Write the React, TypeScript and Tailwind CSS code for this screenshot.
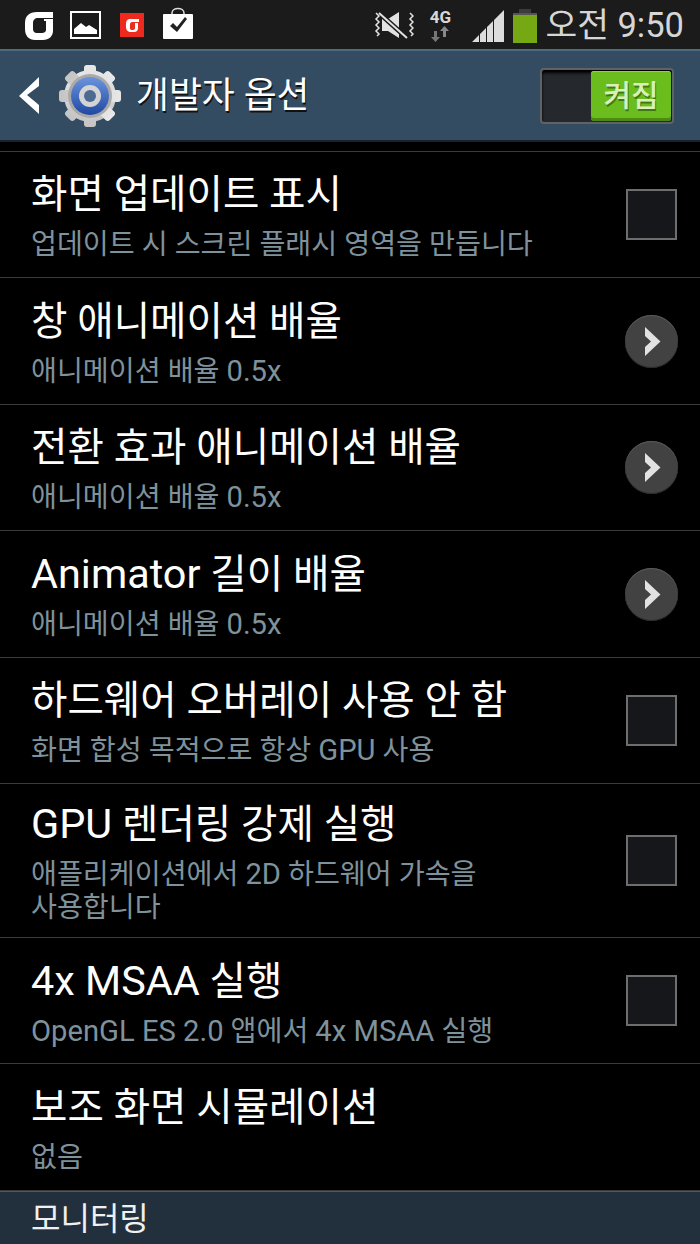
const FONT = "font-['Roboto','Noto_Sans_CJK_KR',sans-serif]";

type Item = {
  title: string;
  sub: string;
  control?: "check" | "arrow";
  height: string;
};

const items: Item[] = [
  { title: "화면 업데이트 표시", sub: "업데이트 시 스크린 플래시 영역을 만듭니다", control: "check", height: "h-[126px]" },
  { title: "창 애니메이션 배율", sub: "애니메이션 배율 0.5x", control: "arrow", height: "h-[127px]" },
  { title: "전환 효과 애니메이션 배율", sub: "애니메이션 배율 0.5x", control: "arrow", height: "h-[126px]" },
  { title: "Animator 길이 배율", sub: "애니메이션 배율 0.5x", control: "arrow", height: "h-[127px]" },
  { title: "하드웨어 오버레이 사용 안 함", sub: "화면 합성 목적으로 항상 GPU 사용", control: "check", height: "h-[126px]" },
  { title: "GPU 렌더링 강제 실행", sub: "애플리케이션에서 2D 하드웨어 가속을\n사용합니다", control: "check", height: "h-[154px]" },
  { title: "4x MSAA 실행", sub: "OpenGL ES 2.0 앱에서 4x MSAA 실행", control: "check", height: "h-[126px]" },
  { title: "보조 화면 시뮬레이션", sub: "없음", height: "h-[127px]" },
];

// latin runs sit a bit larger than the hangul in this font
function Mixed({ text, latin }: { text: string; latin: string }) {
  const parts = text.split(/([A-Za-z0-9.]+(?: [A-Za-z0-9.]+)*)/);
  return (
    <>
      {parts.map((p, i) =>
        i % 2 === 1 ? (
          <span key={i} className={latin}>
            {p}
          </span>
        ) : (
          p
        )
      )}
    </>
  );
}

function StatusBar() {
  return (
    <div className="flex h-[49px] items-center bg-[#1b1b1b] pl-[24px] pr-[16px]">
      <svg width="30" height="32" viewBox="0 0 30 32" className="mr-[16px]">
        <path d="M29 3H13C5 3 1 7 1 14v6c0 7 4 11 10 11h8c6 0 10-4 10-9V10h-9v2h2v9c0 2-2 3-4 3h-5c-3 0-4-2-4-4v-6c0-3 2-5 5-5h15z" fill="#fff" />
      </svg>
      <svg width="31" height="28" viewBox="0 0 31 28" className="mr-[19px]">
        <rect x="1" y="1" width="29" height="26" fill="none" stroke="#fff" strokeWidth="2" />
        <path d="M4 23v-5l7-6 5 4 3-2 8 5v4z" fill="#fff" />
      </svg>
      <svg width="24" height="24" viewBox="0 0 24 24" className="mr-[19px]">
        <rect width="24" height="24" fill="#ee2a1e" />
        <path d="M19 6H11C7 6 6 8 6 11v3c0 3 2 5 5 5h3c3 0 4-2 4-4v-5h-3v5c0 1-1 2-2 2h-1c-2 0-2-1-2-2v-4c0-1 1-2 2-2h7z" fill="#fff" />
      </svg>
      <svg width="30" height="32" viewBox="0 0 30 32" className="-mt-[3px]">
        <path d="M9 9V6c0-6 12-6 12 0v3" fill="none" stroke="#ddd" strokeWidth="1.5" />
        <rect y="7" width="30" height="25" rx="1" fill="#fff" />
        <path d="M7 19l3-3 4 4 8-10 2 2-10 13z" fill="#222" />
      </svg>
      <div className="flex-1" />
      <svg width="40" height="28" viewBox="0 0 40 28" className="mr-[13px]">
        <path d="M8 8h6l11-7v26l-11-7H8z" fill="#e2e2e2" />
        <path d="M5 2l28 25" stroke="#1b1b1b" strokeWidth="5" />
        <path d="M5 2l28 25" stroke="#e2e2e2" strokeWidth="2" />
        <path d="M2 2l3 3-3 3 3 3-3 3 3 3-3 3 3 3-2 2M36 2l3 3-3 3 3 3-3 3 3 3-3 3 3 3-2 2" fill="none" stroke="#e2e2e2" strokeWidth="1.500" />
      </svg>
      <div className="mr-[19px] flex w-[26px] flex-col items-center">
        <span className="text-[17px] leading-[18px] font-bold text-[#d8d8d8]">4G</span>
        <svg width="18" height="16" viewBox="0 0 18 16">
          <path d="M3 5h3v6h3l-4.500 5L0 11h3z" fill="#777" />
          <path d="M12 11h3V5h3L13.500 0 9 5h3z" fill="#888" />
        </svg>
      </div>
      <svg width="32" height="32" viewBox="0 0 32 32" className="mr-[9px] mt-[2px]">
        <path d="M0 32L7 25v7zM8 24l6-6v14H8zM15 17l6-6v21h-6zM22 10l10-10v32H22z" fill="#dcdcdc" />
      </svg>
      <div className="mr-[8px] mt-[2px] flex flex-col items-center">
        <div className="h-[4px] w-[12px] bg-[#3c3c3c]" />
        <div className="h-[30px] w-[24px] border-t-[2px] border-t-[#555] bg-[#76a813]" />
      </div>
      <span className="pt-[1px] text-[34.5px] leading-[40px] text-[#d6d6d6]">오전 9:50</span>
    </div>
  );
}

function ActionBar() {
  return (
    <div className="flex h-[93px] items-center border-t-[2px] border-t-[#4e6a80] border-b-[2px] border-b-[#16222e] bg-[#344c62] pl-[18px]">
      <svg width="22" height="40" viewBox="0 0 22 40" className="mr-[19px]">
        <path d="M21 1v9L9 19l12 10v9L1 20z" fill="#fff" />
      </svg>
      <svg width="62" height="62" viewBox="0 0 62 62" className="mr-[15px]">
        <defs>
          <linearGradient id="gear" x1="0" y1="0" x2="0" y2="1">
            <stop offset="0" stopColor="#e8e8e8" />
            <stop offset="1" stopColor="#c4c4c4" />
          </linearGradient>
          <linearGradient id="blue" x1="0" y1="0" x2="0" y2="1">
            <stop offset="0" stopColor="#6c94dc" />
            <stop offset="1" stopColor="#1f48a4" />
          </linearGradient>
        </defs>
        <g fill="url(#gear)">
          <circle cx="31" cy="31" r="26" />
          <rect x="25" y="0" width="12" height="62" rx="3" />
          <rect x="25" y="0" width="12" height="62" rx="3" transform="rotate(45 31 31)" />
          <rect x="25" y="0" width="12" height="62" rx="3" transform="rotate(90 31 31)" />
          <rect x="25" y="0" width="12" height="62" rx="3" transform="rotate(135 31 31)" />
        </g>
        <circle cx="31" cy="31" r="22" fill="#a9a9a9" />
        <circle cx="31" cy="31" r="19" fill="url(#blue)" />
        <circle cx="31" cy="31" r="11" fill="#d4d4d4" />
        <circle cx="31" cy="31" r="6" fill="#4d6a92" />
      </svg>
      <span className="text-[35.8px] leading-[40px] text-white [text-shadow:1px_2px_0_#111]">개발자 옵션</span>
      <div className="flex-1" />
      <div className="mr-[26px] flex h-[56px] w-[134px] justify-end rounded-[4px] border-[2px] border-[#5f6366] bg-[#25282c] p-[1px] shadow-[inset_0_3px_3px_#000]">
        <div className="flex w-[80px] items-center justify-center rounded-[3px] bg-[#6bbd1e] shadow-[inset_0_1px_0_#8ed24a,inset_0_-3px_0_#4c8a12]">
          <span className="text-[30px] font-medium leading-[36px] text-[#d8f0bc] [text-shadow:1px_2px_0_#3f7a10]">켜짐</span>
        </div>
      </div>
    </div>
  );
}

function Row({ title, sub, control, height }: Item) {
  const lines = sub.split("\n");
  return (
    <div className={`flex ${height} items-center justify-between border-b-[1px] border-b-[#3a3a3a] pl-[31px] pr-[22px]`}>
      <div className="pt-[3px]">
        <div className="text-[39.6px] leading-[50px] text-white">
          <Mixed text={title} latin="text-[41.4px]" />
        </div>
        <div className="mt-[8px] mb-[1px] text-[28.2px] leading-[33px] text-[#7f929c]">
          {lines.map((l) => (
            <div key={l}>
              <Mixed text={l} latin="text-[29.2px]" />
            </div>
          ))}
        </div>
      </div>
      {control === "check" && (
        <div className="mr-[1px] h-[51px] w-[51px] border-[2px] border-[#6e6e6e] bg-[#15171a]" />
      )}
      {control === "arrow" && (
        <div className="flex h-[53px] w-[53px] items-center justify-center rounded-full bg-[#424242] shadow-[inset_0_1px_0_#5a5a5a,inset_0_-1px_0_#2a2a2a]">
          <svg width="16" height="29" viewBox="0 0 16 29" className="ml-[3px]">
            <path d="M0 0L15.500 14.500 0 29V20L6 14.500 0 9z" fill="#e2e2e2" />
          </svg>
        </div>
      )}
    </div>
  );
}

export default function App() {
  return (
    <div className={`h-[1244px] w-[700px] overflow-hidden bg-black ${FONT}`}>
      <StatusBar />
      <ActionBar />
      <div className="h-[10px] border-b-[1px] border-b-[#3a3a3a]" />
      {items.map((item) => (
        <Row key={item.title} {...item} />
      ))}
      <div className="flex h-[53px] items-center border-t-[1px] border-t-[#4a5a68] bg-[#22303d] pl-[31px] pt-[1px] text-[32px] leading-[40px] text-[#f0f0f0]">
        모니터링
      </div>
    </div>
  );
}
